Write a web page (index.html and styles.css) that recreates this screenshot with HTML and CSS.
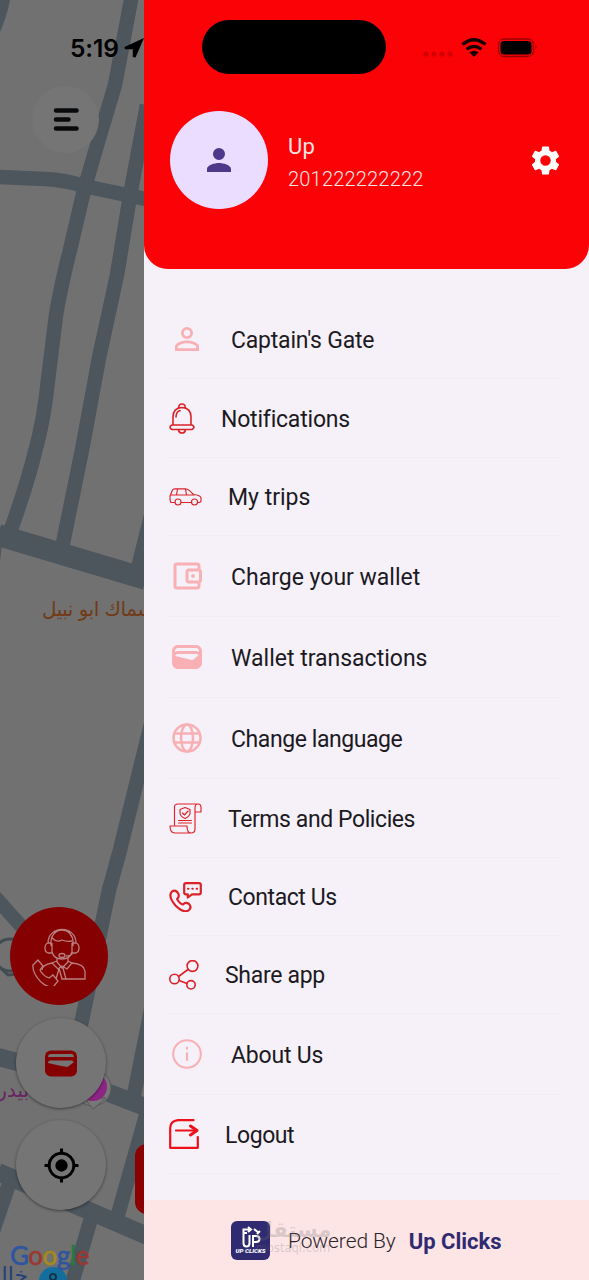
FILE: index.html
```html
<!DOCTYPE html>
<html lang="en">
<head>
<meta charset="utf-8">
<title>Menu</title>
<link rel="stylesheet" href="styles.css">
</head>
<body>
<div class="screen">
  <svg class="map" viewBox="0 0 144 1280" aria-hidden="true">
    <g class="roads">
      <path d="M131 -5 131 0 115 85 100 135 84 190 70 250Q61 285 56 315L48 380Q44 420 35 452Q27 485 9 535"/>
      <path d="M147 105 131 190 117 275 99 358 82 450 62 548"/>
      <path d="M-2 177 45 179Q65 180 84 186L146 199"/>
      <path d="M152 720 120 850 109 890 82 1020 70 1070"/>
      <path d="M-5 897 30 936" stroke-width="14"/>
      <path class="main" d="M-2 535 146 579"/>
      <path d="M153 1000 134 1095"/>
      <path class="mid" d="M-2 1057 55 1072 150 1109"/>
      <path d="M149 1105 117 1218"/>
      <path class="mid" d="M-2 1172 80 1207 150 1237"/>
      <path d="M92 1215 70 1290"/>
      <path d="M11 1178 -10 1240"/>
    </g>
    <path class="road-fill" d="M131 566 144 514V575ZM0 0H10Q7 16 0 32ZM0 543H2L0 562Z"/>
    <circle class="pin-ring" cx="10" cy="955" r="16"/>
    <path class="pin-ring" d="M-6 962 8 975 18 974"/>
    <circle class="pink-halo" cx="93" cy="1088" r="18"/>
    <path class="pink-halo" d="M84 1098 93 1109 106 1098Z"/>
    <circle class="pink-pin" cx="93" cy="1087" r="14"/>
    <circle class="blue-pin" cx="53" cy="1281" r="14"/>
    <circle class="blue-dot" cx="53" cy="1277" r="3"/>
    <path class="blue-dot" d="M49 1283h8"/>
    <text class="place brown" x="42" y="616" textLength="112">سماك ابو نبيل</text>
    <text class="place purple" x="29" y="1097" text-anchor="end">بيدرى</text>
    <text class="place blue" x="28" y="1283" text-anchor="end">خالد</text>
    <rect class="request" x="135" y="1144" width="60" height="70" rx="12"/>
  </svg>

  <div class="clock">5:19
    <svg width="20" height="20" viewBox="0 0 20 20"><path d="M.5 9 20 0 11.500 19.500 8.800 19 8.800 11.300 1 11.300Z"/></svg>
  </div>
  <div class="round menu-button">
    <svg width="28" height="26" viewBox="0 0 28 26"><path d="M4 3.500H24.500M4 12.500H16.500M4 21.500H24.500"/></svg>
  </div>
  <div class="round support">
    <svg width="56" height="60" viewBox="0 0 56 60">
      <path d="M20 20V16a11 12 0 0 1 22 0v4M17 17C17-1 45-1 45 17M20 17h-3q-3 1-3 5t3 5h4V17M41 17h4q3 1 3 5t-3 5h-4V17M21 12q5 5 10 2 5 2 10 1M21 26q2 7 10 7t10-7M42 27q-2 3-7 3"/>
      <ellipse cx="31" cy="29.500" rx="3" ry="2"/>
      <path d="M26 32v4l5 6 6-6v-4M26 35l-5 2 6 6 4-3 5 3 5-6-4-2M21 37q-10 2-10 7M41 37q12 1 13 8v8H31M28 42l3 11h4l-3-11M28 43l-3 10"/>
      <path d="M2 39l5-5 5 6-3 4q3 6 9 8l4-3 5 6-4 5q-5 3-13-4Q1 47 2 39Z"/>
    </svg>
  </div>
  <div class="round wallet-fab">
    <svg width="32" height="27" viewBox="0 0 32 27"><rect width="32" height="26" y=".5" rx="6"/><path class="cut" d="M3 7Q3 4 6 4H26Q29 4 29 7H3ZM5 10.500H27L29 12 22.500 17 14 15.500 3 13Q3 10.500 5 10.500Z"/></svg>
  </div>
  <div class="round locate">
    <svg width="37" height="37" viewBox="0 0 24 24"><path d="M12 8a4 4 0 1 0 0 8 4 4 0 0 0 0-8zm8.940 3A8.990 8.990 0 0 0 13 3.060V1h-2v2.060A8.990 8.990 0 0 0 3.060 11H1v2h2.060A8.990 8.990 0 0 0 11 20.940V23h2v-2.060A8.990 8.990 0 0 0 20.940 13H23v-2h-2.060zM12 19a7 7 0 1 1 0-14 7 7 0 0 1 0 14z"/></svg>
  </div>
  <div class="google"><span class="gb">G</span><span class="gr">o</span><span class="gy">o</span><span class="gb">g</span><span class="gg">l</span><span class="gr">e</span></div>

  <aside class="drawer">
    <header class="head">
      <div class="island"></div>
      <svg class="status" width="118" height="24" viewBox="0 0 118 24">
        <g fill="#d40003"><circle cx="6" cy="18" r="2.600"/><circle cx="14" cy="18" r="2.600"/><circle cx="22" cy="18" r="2.600"/><circle cx="30" cy="18" r="2.600"/></g>
        <g fill="none" stroke="#160000" stroke-width="3.300"><path d="M42.500 8.500Q54 -1 65.500 8.500M46.500 13.300Q54 7.500 61.500 13.300"/></g>
        <path fill="#160000" d="M49.500 16.500q4.500-3.500 9 0L54 21z"/>
        <rect x="78.500" y="3" width="35" height="17.500" rx="5.500" fill="none" stroke="#990000" stroke-width="1.300"/>
        <rect x="80.500" y="5" width="31" height="13.500" rx="3.500"/>
        <path fill="#990000" d="M115.500 9q2 2.500 0 5z"/>
      </svg>
      <div class="profile">
        <div class="avatar">
          <svg width="36" height="36" viewBox="0 0 24 24"><path d="M12 12a4 4 0 1 0 0-8 4 4 0 0 0 0 8zm0 2c-2.670 0-8 1.340-8 4v2h16v-2c0-2.660-5.330-4-8-4z"/></svg>
        </div>
        <div class="who">
          <div class="name">Up</div>
          <div class="phone">201222222222</div>
        </div>
        <svg class="gear" width="35" height="35" viewBox="0 0 24 24"><path d="M19.140 12.940c.04-.3.06-.61.06-.94 0-.32-.02-.64-.07-.94l2.030-1.580a.49.49 0 0 0 .12-.61l-1.920-3.320a.488.488 0 0 0-.59-.22l-2.390.96c-.5-.38-1.030-.7-1.620-.94l-.36-2.540a.484.484 0 0 0-.48-.41h-3.840c-.24 0-.43.17-.47.41l-.36 2.540c-.59.24-1.130.57-1.620.94l-2.390-.96c-.22-.08-.47 0-.59.22L2.740 8.870c-.12.21-.08.47.12.61l2.030 1.580c-.05.3-.09.63-.09.94s.02.64.07.94l-2.030 1.580a.49.49 0 0 0-.12.61l1.920 3.320c.12.22.37.29.59.22l2.390-.96c.5.38 1.030.7 1.620.94l.36 2.540c.05.24.24.41.48.41h3.840c.24 0 .44-.17.47-.41l.36-2.540c.59-.24 1.130-.56 1.620-.94l2.390.96c.22.08.47 0 .59-.22l1.920-3.320c.12-.22.07-.47-.12-.61l-2.010-1.580zM12 15.600a3.600 3.600 0 1 1 0-7.200 3.600 3.600 0 0 1 0 7.200z"/></svg>
      </div>
    </header>

    <nav class="list">
      <a class="row snug">
        <svg class="soft" width="36" height="36" viewBox="0 0 24 24"><path d="M12 5.900a2.100 2.100 0 1 1 0 4.200 2.100 2.100 0 0 1 0-4.200m0 9c2.970 0 6.100 1.460 6.100 2.100v1.100H5.900V17c0-.64 3.130-2.100 6.100-2.100M12 4a4 4 0 1 0 0 8 4 4 0 0 0 0-8zm0 9c-2.670 0-8 1.340-8 4v3h16v-3c0-2.660-5.330-4-8-4z"/></svg>
        <span>Captain's Gate</span>
      </a>
      <a class="row snug">
        <svg class="line" width="26" height="31" viewBox="0 0 26 31"><path d="M4 22V14Q4 5 13 4.500 22 5 22 14v8M3 22h20q2 1 2 2.200T23 26.500H3Q1 25.500 1 24.200T3 22ZM9.800 5Q9.500 1 13 1t3.200 4M9.500 27q.5 3 3.500 3t3.500-3M7 14q0-5 4-6.500"/></svg>
        <span>Notifications</span>
      </a>
      <a class="row short">
        <svg class="line thin" width="33" height="18" viewBox="0 0 33 18"><path d="M5.500 14.500H2Q1 13.500 1 8L3.500 2Q4 .8 6 .8H16.500Q19.500 1 24.500 6.500q6 .5 7.500 3v3.500q0 1.500-3 1.500M12.500 14.500H22M2 7h23M8.500 1 7.500 7M16.500 1 17.500 7"/><circle cx="9" cy="14" r="3"/><circle cx="25.500" cy="14" r="3"/></svg>
        <span>My trips</span>
      </a>
      <a class="row tall">
        <svg class="soft" width="36" height="36" viewBox="0 0 24 24"><path d="M21 7.280V5c0-1.100-.9-2-2-2H5c-1.110 0-2 .9-2 2v14c0 1.100.89 2 2 2h14c1.100 0 2-.9 2-2v-2.280c.59-.35 1-.98 1-1.720V9c0-.74-.41-1.370-1-1.720zM20 9v6h-7V9h7zM5 19V5h14v2h-6c-1.100 0-2 .9-2 2v6c0 1.100.9 2 2 2h6v2H5z"/><circle cx="16" cy="12" r="1.300"/></svg>
        <span>Charge your wallet</span>
      </a>
      <a class="row tall">
        <svg class="soft" width="36" height="36" viewBox="0 0 24 24"><path d="M18 4H6C3.790 4 2 5.790 2 8v8c0 2.210 1.790 4 4 4h12c2.210 0 4-1.790 4-4V8c0-2.210-1.790-4-4-4zm-1.860 9.770c-.24.2-.57.280-.88.200L4.150 11.250C4.450 10.520 5.160 10 6 10h12c.67 0 1.260.330 1.630.840l-3.490 2.930zM20 8.550C19.410 8.210 18.730 8 18 8H6c-.73 0-1.410.210-2 .550V8c0-1.100.9-2 2-2h12c1.100 0 2 .9 2 2v.55z"/></svg>
        <span>Wallet transactions</span>
      </a>
      <a class="row tall tight">
        <svg class="soft globe" width="36" height="36" viewBox="0 0 24 24"><circle cx="12" cy="12" r="9"/><ellipse cx="12" cy="12" rx="4" ry="9"/><path d="M3.500 9h17M3.500 15h17"/></svg>
        <span>Change language</span>
      </a>
      <a class="row tight">
        <svg class="line thin" width="33" height="31" viewBox="0 0 33 31"><path d="M5.500 22V4Q5.500 1 9 1H29q3 0 3 3.500V9h-6M29 1q-3 0-3 4V26q0 4-4 4H6q-5 0-5-7h17q0 7 4 7M9.500 17.500h13M9.500 20h13M16 4.500l5 2v4q-.5 3-5 5-4.500-2-5-5v-4ZM13.500 10l2 2 3.500-4"/></svg>
        <span>Terms and Policies</span>
      </a>
      <a class="row short tight">
        <svg class="line bold" width="33" height="30" viewBox="0 0 33 30"><path d="M17 1.200H30Q31.800 1.200 31.800 3V10.500Q31.800 12.300 30 12.300H23L18.800 15.500V12.300H17Q15.200 12.300 15.200 10.500V3Q15.200 1.200 17 1.200ZM3 9.500q4-2.500 6.500 2.500 1 3-1.500 5 3 5 6 5.500 2.500-3 6-.5 3 3 0 6-5 4-13.500-4.500Q-1.500 14 3 9.500Z"/><path class="dots" d="M19 6.700h.5M23.300 6.700h.5M27.600 6.700h.5"/></svg>
        <span>Contact Us</span>
      </a>
      <a class="row short mid-tight">
        <svg class="line" width="30" height="30" viewBox="0 0 30 30"><circle cx="23.500" cy="6" r="5.400"/><circle cx="5.500" cy="19" r="4.700"/><circle cx="22" cy="24.800" r="4.200"/><path d="M9.500 16.500 19 9.500M10 20.500 18 23.500"/></svg>
        <span>Share app</span>
      </a>
      <a class="row tall snug">
        <svg class="soft info" width="36" height="36" viewBox="0 0 24 24"><circle cx="12" cy="12" r="9.200"/><path d="M12 11v5.500M12 7.200v1.800"/></svg>
        <span>About Us</span>
      </a>
      <a class="row tight">
        <svg class="line heavy" width="30" height="30" viewBox="0 0 30 30"><path d="M24.500 1.200H9Q1.200 2 1.200 9V28.800H28.800V18M7 11.500H27"/><path class="tip" d="M21.500 7 28 11.500 21.500 16"/></svg>
        <span>Logout</span>
      </a>
    </nav>

    <footer class="foot">
      <div class="logo">
        <svg width="22" height="22" viewBox="0 0 22 22"><path d="M7 7H3.500V17q0 3.500 3 3.500t3-3.500V9M3.500 8V3.500H10M8 1l3 2.500L8 6"/><path d="M13 21V10h3q3.500 0 3.500 3t-3.500 3h-3M14 3l5 4M17 8l3-3"/></svg>
        <span>UP CLICKS</span>
      </div>
      <span class="by">Powered By</span>
      <strong class="brand">Up Clicks</strong>
      <div class="watermark"><span class="wm-ar">مستقل</span><span class="wm-en">mostaql.com</span></div>
    </footer>
  </aside>
</div>
</body>
</html>
```

FILE: styles.css
```css
* { box-sizing: border-box; }
body { margin: 0; font-family: Roboto, "Noto Sans", sans-serif; }
svg { display: block; flex: none; }

.screen {
  position: relative;
  width: 589px;
  height: 1280px;
  overflow: hidden;
  display: flex;
  justify-content: flex-end;
  background: #717171;
}

/* map behind the drawer */
.map { position: absolute; left: 0; top: 0; width: 144px; height: 1280px; }
.roads { fill: none; stroke: #4d555d; stroke-width: 14.5; stroke-linejoin: round; }
.roads .main { stroke-width: 22; }
.roads .mid { stroke-width: 18; }
.road-fill { fill: #4d555d; }
.pin-ring { fill: none; stroke: #414d52; stroke-width: 3; }
.pink-halo { fill: #777; stroke: #595959; stroke-width: 1; }
.pink-pin { fill: #8c2583; }
.blue-pin { fill: #126f9d; }
.blue-dot { fill: none; stroke: #14324a; stroke-width: 2; }
.place { font: 20px "DejaVu Sans", sans-serif; }
.brown { fill: #713b17; }
.purple { fill: #692463; }
.blue { fill: #24407a; font-size: 22px; }
.request { fill: #8b0000; }

.clock {
  position: absolute;
  left: 70px;
  top: 33px;
  display: flex;
  align-items: center;
  gap: 5px;
  font: 600 24.5px/30px Inter, sans-serif;
  letter-spacing: -.1px;
  color: #000;
}

.round {
  position: absolute;
  display: flex;
  align-items: center;
  justify-content: center;
  border-radius: 50%;
  background: #757575;
}
.menu-button { left: 32px; top: 86px; width: 67px; height: 67px; }
.menu-button svg { fill: none; stroke: #080a0c; stroke-width: 4.5; stroke-linecap: round; }
.support { left: 10px; top: 907px; width: 98px; height: 98px; background: #850000; }
.support svg { fill: none; stroke: #b98080; stroke-width: 1.3; }
.wallet-fab, .locate {
  left: 16px;
  width: 90px;
  height: 90px;
  box-shadow: 0 1px 3px rgba(0, 0, 0, .45);
}
.wallet-fab { top: 1018px; }
.wallet-fab svg { fill: #850000; }
.wallet-fab .cut { fill: #757575; }
.locate { top: 1120px; }

.google {
  position: absolute;
  left: 10px;
  top: 1239px;
  font: 500 26px/32px Lato, sans-serif;
  letter-spacing: -.5px;
  -webkit-text-stroke: .4px;
}
.gb { color: #2d55a0; }
.gr { color: #9b3832; }
.gy { color: #a48a1c; }
.gg { color: #277a40; }

/* drawer */
.drawer {
  position: relative;
  width: 445px;
  height: 1280px;
  display: flex;
  flex-direction: column;
  background: #f6f1f9;
}
.head {
  position: relative;
  height: 269px;
  padding: 111px 26px 0 26px;
  background: #fb0207;
  border-radius: 0 0 24px 24px;
}
.island {
  position: absolute;
  left: 58px;
  top: 20px;
  width: 184px;
  height: 54px;
  border-radius: 27px;
  background: #000;
}
.status { position: absolute; left: 276px; top: 36px; }
.profile { display: flex; align-items: center; }
.avatar {
  width: 98px;
  height: 98px;
  border-radius: 50%;
  display: flex;
  align-items: center;
  justify-content: center;
  background: #eaddff;
  fill: #4f378a;
}
.who { flex: 1; margin-left: 20px; padding-top: 5px; color: #ffe5e2; }
.name { font-size: 22px; line-height: 32px; letter-spacing: .2px; }
.phone { font-size: 20px; line-height: 32px; font-weight: 300; letter-spacing: .2px; }
.gear { fill: #fff; }

.list { display: flex; flex-direction: column; padding: 30px 26px 0 24px; }
.row {
  height: 79px;
  flex: none;
  display: flex;
  align-items: center;
  gap: 26px;
  padding-left: 1px;
  border-bottom: 1px solid #f1edf3;
  font-size: 23px;
  color: #1c1a1f;
}
.row:first-child { height: 80px; padding-top: 1px; }
.row span { padding-top: 2px; }
.row.short { height: 78px; }
.row.tall { height: 81px; }
.snug { letter-spacing: -.2px; }
.mid-tight { letter-spacing: -.3px; }
.tight { letter-spacing: -.42px; }
.soft { fill: #f8b0b5; }
.globe, .info { fill: none; stroke: #f8b0b5; stroke-width: 1.7; }
.info { stroke-width: 1.4; }
.line { fill: none; stroke: #dc2229; stroke-width: 1.6; stroke-linejoin: round; stroke-linecap: round; }
.thin { stroke-width: 1.15; }
.bold { stroke-width: 2.2; }
.heavy { stroke: #ee101a; stroke-width: 2.2; }
.tip { stroke-width: 3; }
.dots { stroke-width: 2; }

.foot {
  position: relative;
  height: 80px;
  margin-top: auto;
  padding-left: 87px;
  display: flex;
  align-items: center;
  background: #fde5e6;
}
.logo {
  width: 39px;
  height: 39px;
  border-radius: 6px;
  background: #302b70;
  color: #fff;
  display: flex;
  flex-direction: column;
  align-items: center;
  justify-content: center;
}
.logo svg { fill: none; stroke: #fff; stroke-width: 2; }
.logo span { font: italic 900 6.2px/7px Roboto, sans-serif; white-space: nowrap; }
.by { margin-left: 18px; padding-top: 1px; font-size: 21px; font-weight: 300; letter-spacing: -.1px; color: #29242a; }
.brand { margin-left: 13px; padding-top: 2px; font-size: 22px; color: #302b70; }
.watermark {
  position: absolute;
  left: 112px;
  top: 18px;
  width: 74px;
  display: flex;
  flex-direction: column;
  align-items: center;
  color: rgba(110, 110, 110, .25);
}
.wm-ar { font: bold 21px/24px "DejaVu Sans", sans-serif; }
.wm-en { font: 11.5px/12px "DejaVu Sans", sans-serif; }
```
